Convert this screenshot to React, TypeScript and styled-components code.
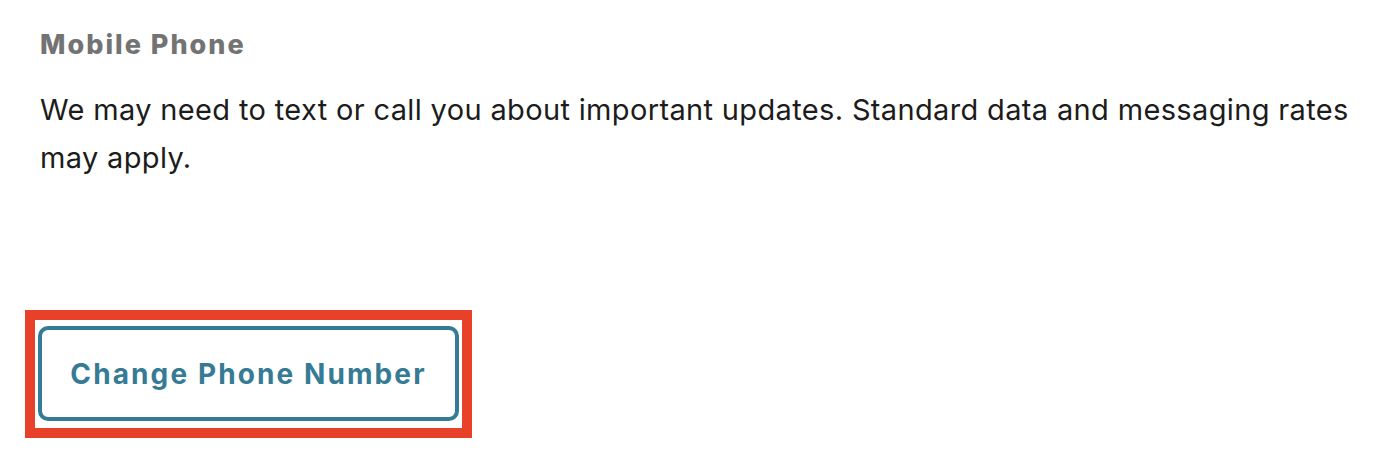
import React from "react";
import styled, { createGlobalStyle } from "styled-components";

const Global = createGlobalStyle`
  html, body { margin: 0; padding: 0; background: #ffffff; }
  body { font-family: Inter, "Open Sans", sans-serif; }
`;

const Page = styled.div`
  padding: 29px 20px 0 40px;
  display: flex;
  flex-direction: column;
  align-items: flex-start;
`;

const Title = styled.h2`
  margin: 0;
  font-size: 27px;
  line-height: 32px;
  font-weight: 800;
  letter-spacing: 2px;
  color: #737373;
`;

const Body = styled.p`
  margin: 25px 0 0 0;
  font-size: 29px;
  line-height: 48px;
  letter-spacing: 0.35px;
  color: #1c1c1c;
  font-weight: 400;
`;

const Highlight = styled.div`
  margin: 128px 0 0 -15px;
  border: 10px solid #e8412a;
  padding: 6px 3px 7px 3px;
`;

const Button = styled.button`
  display: flex;
  align-items: center;
  justify-content: center;
  width: 421px;
  height: 95px;
  box-sizing: border-box;
  border: 4px solid #367b95;
  border-radius: 10px;
  background: #ffffff;
  color: #367b95;
  font-family: Inter, "Open Sans", sans-serif;
  font-size: 28px;
  font-weight: 700;
  letter-spacing: 2.1px;
  cursor: pointer;
`;

export default function App() {
  return (
    <>
      <Global />
      <Page>
        <Title>Mobile Phone</Title>
        <Body>
          We may need to text or call you about important updates. Standard data and messaging rates may apply.
        </Body>
        <Highlight>
          <Button>Change Phone Number</Button>
        </Highlight>
      </Page>
    </>
  );
}
